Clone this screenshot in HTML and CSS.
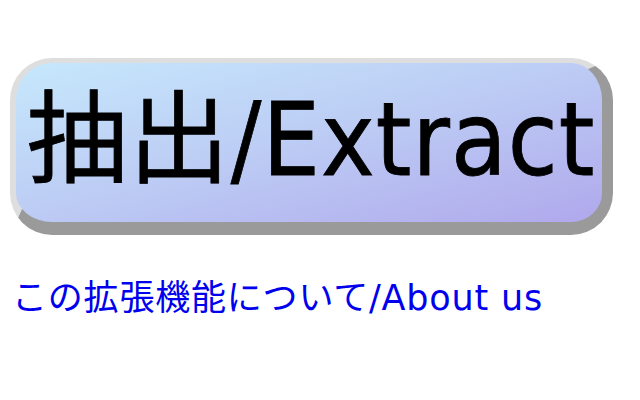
FILE: index.html
```html
<!DOCTYPE html>
<html lang="ja">
<head>
<meta charset="utf-8">
<title>Extract</title>
<link rel="stylesheet" href="styles.css">
</head>
<body>
<main class="popup">
  <button class="extract-btn" type="button">抽出/Extract</button>
  <a class="about-link" href="#">この拡張機能について/About us</a>
</main>
</body>
</html>
```

FILE: styles.css
```css
html, body {
  margin: 0;
  padding: 0;
  background: #ffffff;
}

.popup {
  display: flex;
  flex-direction: column;
  align-items: flex-start;
  padding: 58px 0 0 10px;
  gap: 43px;
}

.extract-btn {
  box-sizing: border-box;
  width: 603px;
  height: 177px;
  margin: 0;
  padding: 0 0 6px 4px;
  border-style: solid;
  border-width: 5px 11px 13px 6px;
  border-color: #dedede #9a9a9a #9a9a9a #dedede;
  border-radius: 42px;
  background: linear-gradient(165deg, #c6e8fc 0%, #bccbf4 50%, #b0a8ec 100%);
  color: #000000;
  font-family: "DejaVu Sans Condensed", "DejaVu Sans", "Noto Sans CJK JP", sans-serif;
  font-size: 101px;
  line-height: 150px;
  letter-spacing: 1.1px;
  -webkit-text-stroke: 0.8px #000000;
  text-align: center;
  white-space: nowrap;
  cursor: pointer;
}

.about-link {
  margin-left: 2px;
  color: #0000ee;
  text-decoration: none;
  font-family: "DejaVu Sans", "Noto Sans CJK JP", sans-serif;
  font-size: 35px;
  line-height: 40px;
  letter-spacing: 0.8px;
  white-space: nowrap;
}
```
